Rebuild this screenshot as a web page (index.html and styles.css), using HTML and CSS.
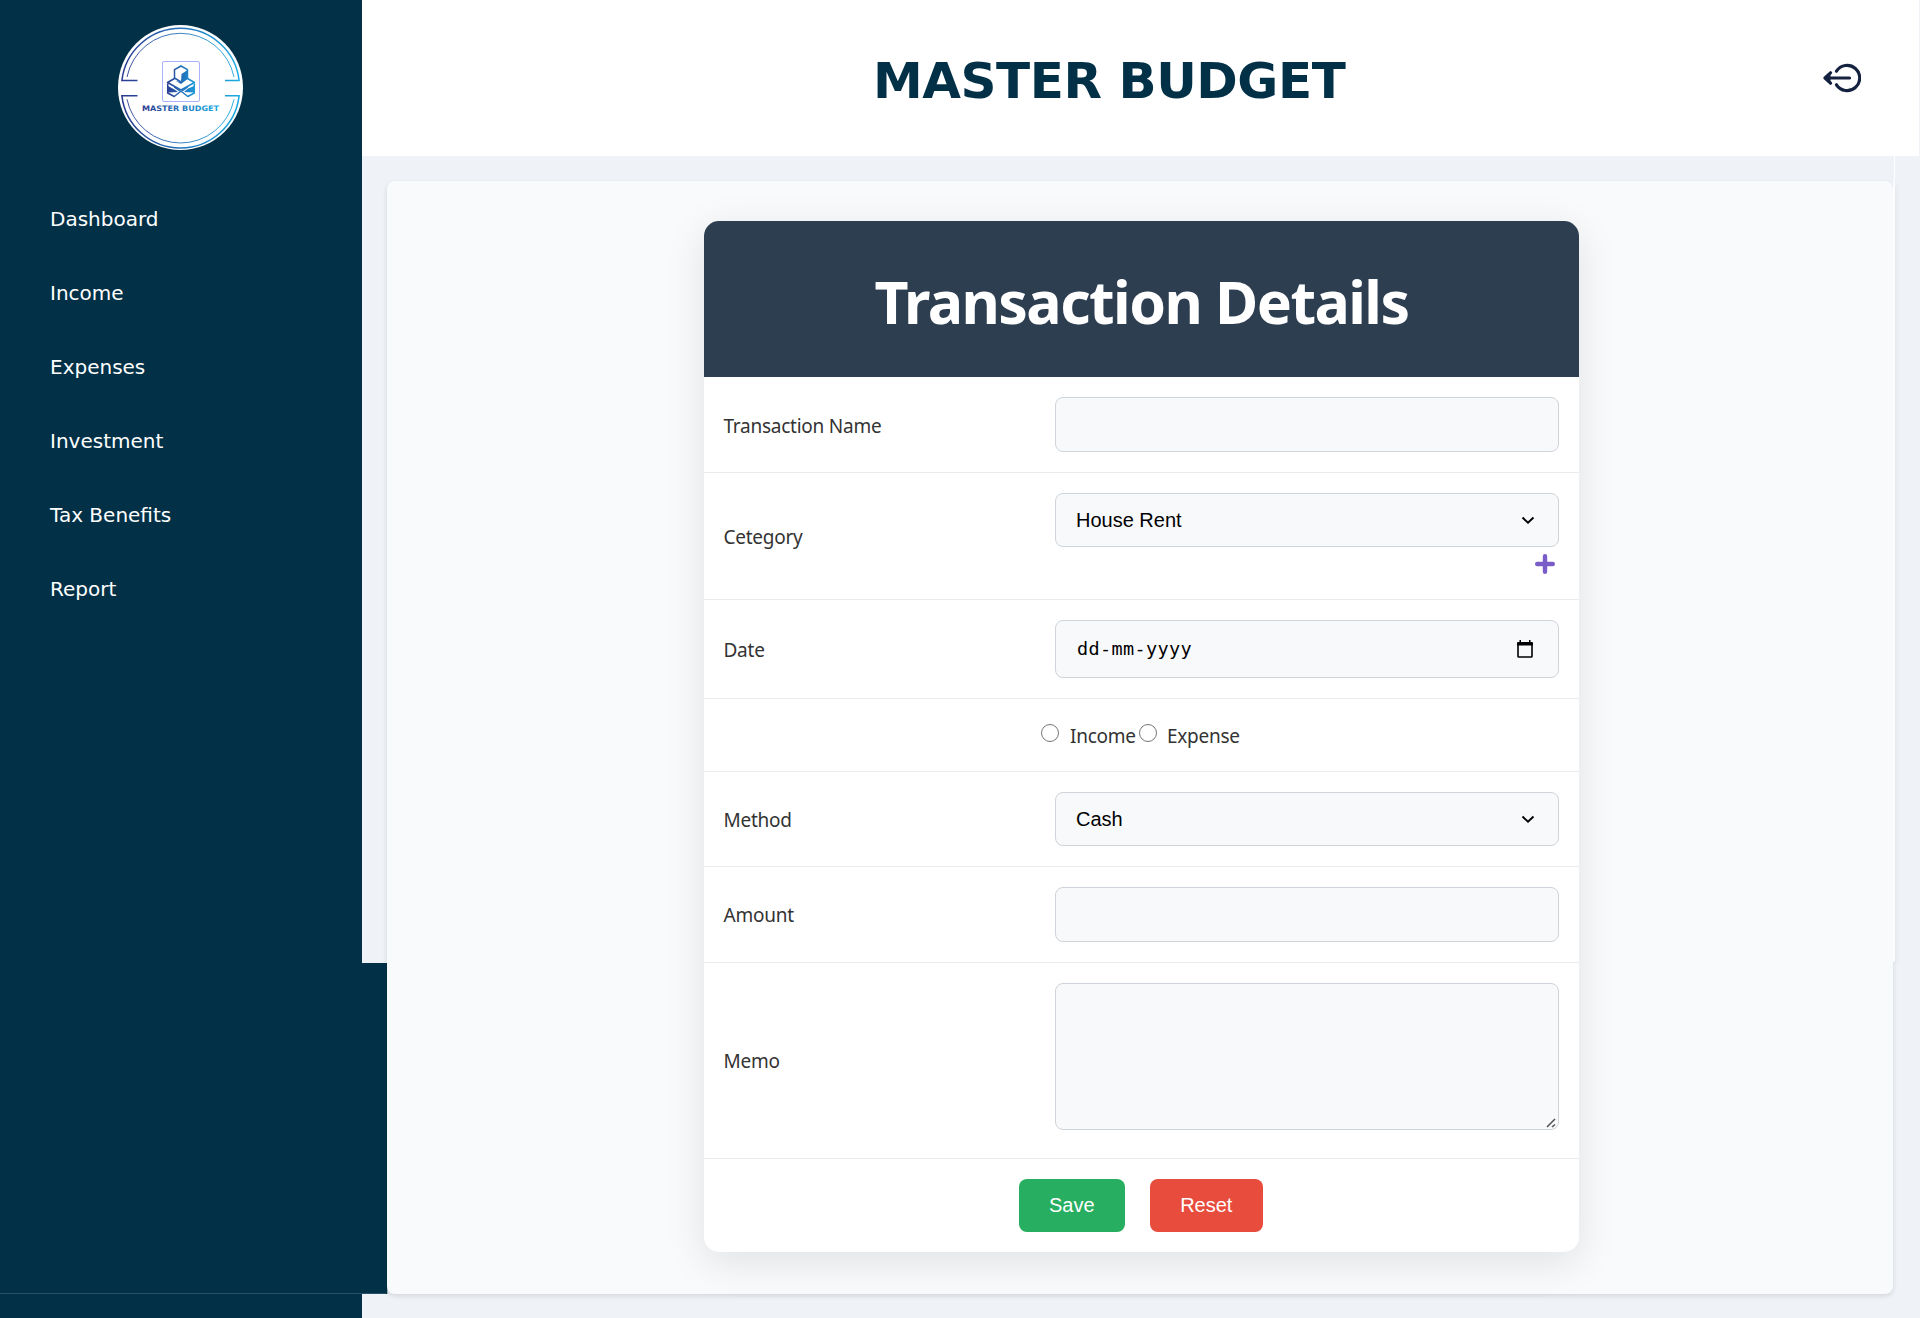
FILE: index.html
```html
<!DOCTYPE html>
<html lang="en">
<head>
<meta charset="utf-8">
<title>Master Budget</title>
<link rel="stylesheet" href="styles.css">
</head>
<body>
<div class="layout">
  <aside class="sidebar">
    <svg class="logo" viewBox="0 0 125 125">
      <defs>
        <linearGradient id="brand" gradientUnits="userSpaceOnUse" x1="4" y1="0" x2="121" y2="0">
          <stop offset="0" stop-color="#2b3990"/><stop offset="1" stop-color="#1cabe2"/>
        </linearGradient>
        <linearGradient id="mark" gradientUnits="userSpaceOnUse" x1="48" y1="0" x2="78" y2="0">
          <stop offset="0" stop-color="#2b3990"/><stop offset="1" stop-color="#1c9fdc"/>
        </linearGradient>
        <linearGradient id="word" gradientUnits="userSpaceOnUse" x1="24" y1="0" x2="101" y2="0">
          <stop offset="0" stop-color="#2b3990"/><stop offset="1" stop-color="#1cabe2"/>
        </linearGradient>
      </defs>
      <circle cx="62.5" cy="62.5" r="62.5" fill="#fff"/>
      <g fill="none" stroke="url(#brand)">
        <path stroke-width="1.5" d="M19.5 55.5H3.9A59 59 0 0 1 121.1 55.5H107M19.5 70.8H3.9A59 59 0 0 0 121.1 70.8H107"/>
        <path stroke-width=".9" d="M9 52A54.600 54.600 0 0 1 116 52M9 74.300A54.600 54.600 0 0 0 116 74.300"/>
      </g>
      <rect x="44.500" y="36.500" width="37" height="40" rx="1.500" fill="#fff" stroke="#a9b2fb"/>
      <g fill="none" stroke="url(#mark)" stroke-width="1.500" stroke-linejoin="round">
        <path d="M63 41L69.500 44.700V53L63 57L56.500 53V44.700Z"/>
        <path d="M56.500 53.500L49.500 57.500L63 65L76.500 57.500L69.500 53.500"/>
        <path d="M56.200 62L62.500 66.500L56.200 71.500L49.700 68V58.500M69.800 62L63.500 66.500L69.800 71.500L76.300 68V58.500"/>
      </g>
      <path fill="url(#mark)" d="M63.500 49L69.500 45V54L63 59L58 56L63 57ZM50 61L56.500 64.500L60 67L50 67.500ZM66 67L70 63.500L76 61V67.500Z"/>
      <text class="logo-text" x="24" y="86" textLength="77" lengthAdjust="spacingAndGlyphs" fill="url(#word)">MASTER BUDGET</text>
    </svg>
    <nav class="nav">
      <a>Dashboard</a>
      <a>Income</a>
      <a>Expenses</a>
      <a>Investment</a>
      <a>Tax Benefits</a>
      <a>Report</a>
    </nav>
  </aside>
  <div class="page">
    <header class="topbar">
      <h1>MASTER BUDGET</h1>
      <svg class="logout" viewBox="0 0 38 30" fill="none" stroke="#14213f" stroke-width="3.200" stroke-linecap="round" stroke-linejoin="round">
        <path d="M13.500 8.200A12.600 12.600 0 1 1 13.500 21.800"/><path d="M3 15H26.500M7.500 9.800L2 15L7.500 20.200"/>
        <path fill="#14213f" stroke-width="1" d="M2 15L7 10.500V19.500Z"/>
      </svg>
    </header>
    <main class="content">
      <section class="panel">
        <form class="card">
          <h2>Transaction Details</h2>
          <div class="row"><label>Transaction Name</label><input class="field" type="text"></div>
          <div class="row">
            <label>Cetegory</label>
            <div class="stack">
              <div class="select field"><span>House Rent</span><svg viewBox="0 0 14 9"><path d="M1.500 1.500L7 6.800L12.500 1.500"/></svg></div>
              <svg class="plus" viewBox="0 0 20 20"><path d="M10 2.200V17.800M2.200 10H17.800"/></svg>
            </div>
          </div>
          <div class="row">
            <label>Date</label>
            <div class="date field"><span>dd-mm-yyyy</span>
              <svg viewBox="0 0 16 18"><path fill="none" stroke="#000" stroke-width="1.600" d="M1 3V16.200Q1 17 1.800 17H14.200Q15 17 15 16.200V3"/><path d="M0 5.600V3Q0 2 1 2H2.500V0H4V2H12V0H13.500V2H15Q16 2 16 3V5.600Z"/></svg>
            </div>
          </div>
          <div class="row radios">
            <input type="radio" name="kind"><span class="income">Income</span>
            <input type="radio" name="kind"><span>Expense</span>
          </div>
          <div class="row"><label>Method</label>
            <div class="select field"><span>Cash</span><svg viewBox="0 0 14 9"><path d="M1.500 1.500L7 6.800L12.500 1.500"/></svg></div>
          </div>
          <div class="row"><label class="level">Amount</label><input class="field" type="text"></div>
          <div class="row memo"><label class="level">Memo</label>
            <div class="area"><textarea class="field"></textarea><svg viewBox="0 0 10 10"><path d="M1 9L9 1M6 9L9 6.500"/></svg></div>
          </div>
          <div class="row actions">
            <button type="button" class="save">Save</button>
            <button type="button" class="reset">Reset</button>
          </div>
        </form>
      </section>
    </main>
  </div>
</div>
</body>
</html>
```
FILE: styles.css
```css
* { box-sizing: border-box; }
body { margin: 0; background: #eff3f8; font-family: "Noto Sans", sans-serif; }
.layout { display: grid; grid-template-columns: 362px 1fr; height: 1318px; position: relative; overflow: hidden; }

.sidebar { background: #023047; padding-top: 25px; }
.logo { display: block; width: 125px; height: 125px; margin-left: 118px; }
.logo-text { font: bold 7.5px "DejaVu Sans", sans-serif; }
.nav { display: flex; flex-direction: column; padding: 32px 0 0 50px; }
.nav a { height: 74px; color: #fff; font: 20px/74px "DejaVu Sans", sans-serif; }

.topbar { height: 156px; background: #fff; display: flex; align-items: center; position: relative; margin-right: 1px; }
h1 { margin: 5px 0 0 511px; font: bold 50px/60px "DejaVu Sans", sans-serif; letter-spacing: -.45px; color: #023047; white-space: nowrap; }
.logout { position: absolute; left: 1461px; top: 63px; width: 38px; height: 30px; }

.content { padding: 25px; position: relative; }
/* sidebar background continues beside the lower half of the panel */
.content::before { content: ""; position: absolute; left: 0; top: 807px; width: 25px; height: 331px; background: #023047; border-right: 1px solid #a9b8c2; }
.content::after { content: ""; position: absolute; left: -362px; top: 1137px; width: 386px; height: 1px; background: #28506a; }
.panel { position: relative; width: 1506px; height: 1113px; padding-top: 40px; background: #f8fafc; border-radius: 8px; box-shadow: 0 2px 5px rgba(0, 0, 0, .12); }
/* scroll container edge, right of the panel */
.panel::before { content: ""; position: absolute; right: -2px; top: 0; width: 2px; height: 781px; background: #fcfdfe; border-radius: 0 2px 2px 0; box-shadow: 2px 2px 4px rgba(0, 0, 0, .05); }
.panel::after { content: ""; position: absolute; right: -2px; top: -25px; width: 1px; height: 25px; background: #fdfeff; }

.card { width: 875px; height: 1031px; margin-left: 317px; background: #fff; border-radius: 15px; box-shadow: 0 10px 40px rgba(0, 0, 0, .1); color: #333; font-size: 19px; letter-spacing: -.25px; }
h2 { margin: 0; height: 156px; border-radius: 15px 15px 0 0; background: #2c3e50; color: #fff; font: bold 59px/161px "Noto Sans", sans-serif; letter-spacing: -1.550px; text-align: center; white-space: nowrap; }
.row { display: flex; align-items: center; justify-content: space-between; padding: 20px 20px 20px 19.5px; border-bottom: 1px solid #e9ecef; }
label, .radios span { padding-top: 2px; }
label.level { padding-top: 0; }
.field { width: 504px; height: 55px; border: 1px solid #ced4da; border-radius: 8px; background: #f8f9fb; padding: 0 20px; font: 20px "Liberation Sans", sans-serif; letter-spacing: 0; color: #000; }
.select { display: flex; align-items: center; justify-content: space-between; height: 54px; padding-right: 23px; }
.select svg { width: 14px; height: 9px; fill: none; stroke: #000; stroke-width: 1.9; }
.stack { display: flex; flex-direction: column; align-items: flex-end; height: 86px; gap: 7px; }
.plus { width: 20px; height: 20px; margin-right: 4px; fill: none; stroke: #7a5cc8; stroke-width: 4.4; stroke-linecap: round; }
.date { display: flex; align-items: center; justify-content: space-between; height: 58px; padding-right: 25px; padding-left: 21px; font: 18.5px "DejaVu Sans Mono", monospace; letter-spacing: .35px; }
.date span { padding-bottom: 2px; }
.date svg { width: 16px; height: 18px; }
.radios { height: 73px; justify-content: flex-start; padding-left: 337px; }
.radios input { width: 18px; height: 18px; margin: -5px 11px 0 0; }
.radios .income { width: 69px; white-space: nowrap; }
.radios .income + input { margin-right: 10px; }
.memo { height: 196px; align-items: flex-start; }
.memo label { align-self: center; }
.area { position: relative; }
.area svg { position: absolute; right: 3px; bottom: 2px; width: 10px; height: 10px; fill: none; stroke: #555; stroke-width: 1.6; }
textarea.field { height: 147px; display: block; resize: none; }
.actions { justify-content: center; gap: 25px; padding-right: 21px; border: 0; }
.actions button { height: 53px; border: 0; border-radius: 8px; color: #fff; font: 20px "Liberation Sans", sans-serif; padding: 0; }
.save { width: 106px; background: #27ae60; }
.reset { width: 113px; background: #e74c3c; }
```
